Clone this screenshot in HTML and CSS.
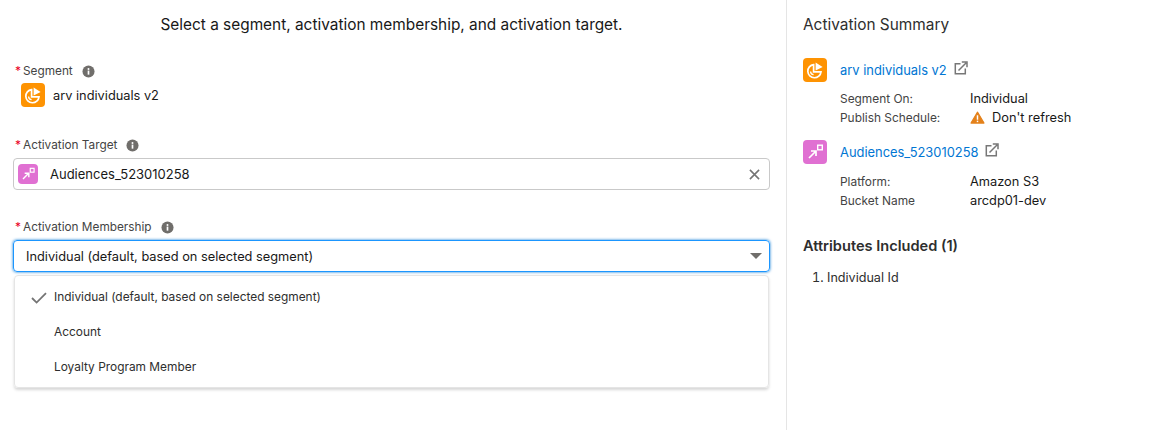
FILE: index.html
```html
<!DOCTYPE html>
<html lang="en">
<head>
<meta charset="utf-8">
<title>Activation</title>
<link rel="stylesheet" href="styles.css">
</head>
<body>
<svg class="defs" width="0" height="0" aria-hidden="true">
  <defs>
    <symbol id="seg" viewBox="0 0 24 24">
      <path d="M10.6 6.6a6.6 6.6 0 1 0 7.4 7.2h-7.4z" fill="none" stroke="#fff" stroke-width="1.7"/>
      <path d="M7.6 13.4a3.2 3.2 0 0 0 3 3.2" fill="none" stroke="#fff" stroke-width="1.3"/>
      <path d="M12.6 4.6 19.6 9l-7 3.6z" fill="#fff"/>
    </symbol>
    <symbol id="tgt" viewBox="0 0 24 24">
      <path d="M6 18 12.5 11.5M8 11h5v5" fill="none" stroke="#fff" stroke-width="1.7"/>
      <rect x="14.7" y="5.2" width="4.6" height="4.6" fill="none" stroke="#fff" stroke-width="1.4"/>
    </symbol>
    <symbol id="ext" viewBox="0 0 14 14">
      <path d="M6.5 2.8H1.3v10h10V7.5" fill="none" stroke="#777" stroke-width="1.5"/>
      <path d="M4.5 9.5 12 2M7.8 1h5.2v5.2" fill="none" stroke="#777" stroke-width="1.5"/>
    </symbol>
    <symbol id="info" viewBox="0 0 14 14">
      <circle cx="7" cy="7" r="6.5" fill="#706e6b"/>
      <rect x="6.1" y="6" width="1.8" height="4.4" fill="#fff"/>
      <circle cx="7" cy="4.2" r="1.05" fill="#fff"/>
    </symbol>
  </defs>
</svg>
<div class="app">
  <main class="main">
    <h1 class="title">Select a segment, activation membership, and activation target.</h1>

    <section class="field field-segment">
      <div class="label"><span class="req">*</span>Segment<svg class="info"><use href="#info"/></svg></div>
      <div class="seg-value">
        <span class="badge badge-orange"><svg><use href="#seg"/></svg></span>
        <span>arv individuals v2</span>
      </div>
    </section>

    <section class="field field-target">
      <div class="label"><span class="req">*</span>Activation Target<svg class="info"><use href="#info"/></svg></div>
      <div class="input">
        <span class="badge badge-pink badge-small"><svg><use href="#tgt"/></svg></span>
        <span class="input-text">Audiences_523010258</span>
        <svg class="clear" viewBox="0 0 12 12"><path d="M1 1l10 10M11 1 1 11" stroke="#747474" stroke-width="1.7" fill="none"/></svg>
      </div>
    </section>

    <section class="field field-member">
      <div class="label"><span class="req">*</span>Activation Membership<svg class="info"><use href="#info"/></svg></div>
      <div class="select">
        <span>Individual (default, based on selected segment)</span>
        <span class="caret"></span>
      </div>
      <ul class="menu">
        <li class="option"><svg class="check" viewBox="0 0 16 12"><path d="M1 6l4.6 4.6L15 1.2" fill="none" stroke="#747474" stroke-width="1.8"/></svg>Individual (default, based on selected segment)</li>
        <li class="option">Account</li>
        <li class="option">Loyalty Program Member</li>
      </ul>
    </section>
  </main>

  <aside class="side">
    <h2 class="side-title">Activation Summary</h2>

    <div class="entity">
      <span class="badge badge-orange"><svg><use href="#seg"/></svg></span>
      <a class="link">arv individuals v2</a>
      <svg class="ext"><use href="#ext"/></svg>
    </div>
    <dl class="facts">
      <dt>Segment On:</dt><dd>Individual</dd>
      <dt>Publish Schedule:</dt>
      <dd class="warn"><svg class="warn-icon" viewBox="0 0 16 14"><path d="M8 1.2 15 13H1z" fill="#e4811a" stroke="#e4811a" stroke-width="1.2" stroke-linejoin="round"/><rect x="7.2" y="4.6" width="1.6" height="4.8" fill="#fff"/><rect x="7.2" y="10.4" width="1.6" height="1.6" fill="#fff"/></svg>Don't refresh</dd>
    </dl>

    <div class="entity entity-second">
      <span class="badge badge-pink"><svg><use href="#tgt"/></svg></span>
      <a class="link">Audiences_523010258</a>
      <svg class="ext"><use href="#ext"/></svg>
    </div>
    <dl class="facts facts-second">
      <dt>Platform:</dt><dd>Amazon S3</dd>
      <dt>Bucket Name</dt><dd>arcdp01-dev</dd>
    </dl>

    <h3 class="attr-title">Attributes Included (1)</h3>
    <ol class="attr-list"><li>Individual Id</li></ol>
  </aside>
</div>
</body>
</html>
```
FILE: styles.css
```css
* { box-sizing: border-box; }
html, body { margin: 0; height: 100%; }
body {
  background: #fff;
  color: #181818;
  font-family: Inter, "Liberation Sans", sans-serif;
  font-size: 12.8px;
  overflow: hidden;
}
.defs { position: absolute; }
.app { display: flex; height: 430px; }
.main {
  width: 787px;
  flex: none;
  border-right: 1px solid #e5e5e5;
  padding: 15px 16px 0 13px;
}
.title {
  margin: 0;
  height: 20px;
  font-size: 15.4px;
  line-height: 20px;
  font-weight: 400;
  text-align: center;
}
.field-segment { margin-top: 27px; }
.field-target { margin-top: 29px; }
.field-member { margin-top: 28px; }
.label {
  display: flex;
  align-items: center;
  height: 18px;
  padding-left: 2px;
  font-size: 11.8px;
  color: #444;
}
.req { color: #ea001e; width: 8px; font-size: 12px; line-height: 1; }
.info { width: 13px; height: 13px; margin-left: 9px; }
.seg-value {
  display: flex;
  align-items: center;
  gap: 8px;
  margin-top: 3px;
  padding-left: 8px;
  height: 24px;
}
.badge {
  display: inline-flex;
  flex: none;
  width: 24px;
  height: 24px;
  border-radius: 4px;
}
.badge svg { width: 100%; height: 100%; }
.badge-orange { background: #fe9302; }
.badge-pink { background: #e070d2; }
.badge-small { width: 20px; height: 20px; }
.input {
  display: flex;
  align-items: center;
  height: 32px;
  margin-top: 4px;
  padding: 0 8px 0 4px;
  border: 1px solid #c9c9c9;
  border-radius: 4px;
}
.input-text { flex: 1; margin-left: 12px; font-size: 13px; }
.clear { width: 11px; height: 11px; margin-right: 1px; }
.select {
  display: flex;
  align-items: center;
  justify-content: space-between;
  height: 32px;
  margin-top: 4px;
  padding: 0 8px 0 12px;
  border: 1px solid #1b96ff;
  border-radius: 4px;
  box-shadow: 0 0 3px #0176d3;
}
.caret {
  width: 0;
  height: 0;
  margin-right: -1px;
  border-left: 6px solid transparent;
  border-right: 6px solid transparent;
  border-top: 6px solid #706e6b;
}
.menu {
  list-style: none;
  margin: 3px 1px 0;
  padding: 3px 0;
  height: 113px;
  border: 1px solid #e5e5e5;
  border-radius: 4px;
  box-shadow: 0 2px 3px rgba(0, 0, 0, .16);
  font-size: 11.9px;
}
.option {
  position: relative;
  display: flex;
  align-items: center;
  height: 35px;
  padding-left: 39px;
  color: #2e2e2e;
}
.check { position: absolute; left: 16px; top: 13px; width: 16px; height: 12px; }
.side { flex: 1; padding: 15px 16px 0 16px; }
.side-title {
  margin: 0;
  height: 20px;
  font-size: 15.4px;
  line-height: 20px;
  font-weight: 400;
  color: #2e2e2e;
}
.entity {
  display: flex;
  align-items: center;
  margin-top: 23px;
  height: 24px;
}
.entity-second { margin-top: 13px; }
.link { margin-left: 13px; color: #0176d3; font-size: 12.9px; }
.ext { width: 14px; height: 14px; margin: -5px 0 0 7px; }
.facts {
  display: grid;
  grid-template-columns: 130px 1fr;
  grid-auto-rows: 19px;
  align-items: center;
  margin: 7px 0 0 37px;
  font-size: 11.9px;
}
.facts-second { margin-top: 8px; }
.facts dt { color: #444; }
.facts dd { margin: 0; font-size: 12.8px; color: #181818; }
.warn { display: flex; align-items: center; }
.warn-icon { width: 15px; height: 13px; margin-right: 7px; }
.attr-title {
  margin: 27px 0 0;
  font-size: 14.6px;
  line-height: 18px;
  font-weight: 600;
  color: #2e2e2e;
}
.attr-list {
  margin: 14px 0 0;
  padding-left: 24px;
  font-size: 12.6px;
  line-height: 18px;
  color: #2e2e2e;
}
```
